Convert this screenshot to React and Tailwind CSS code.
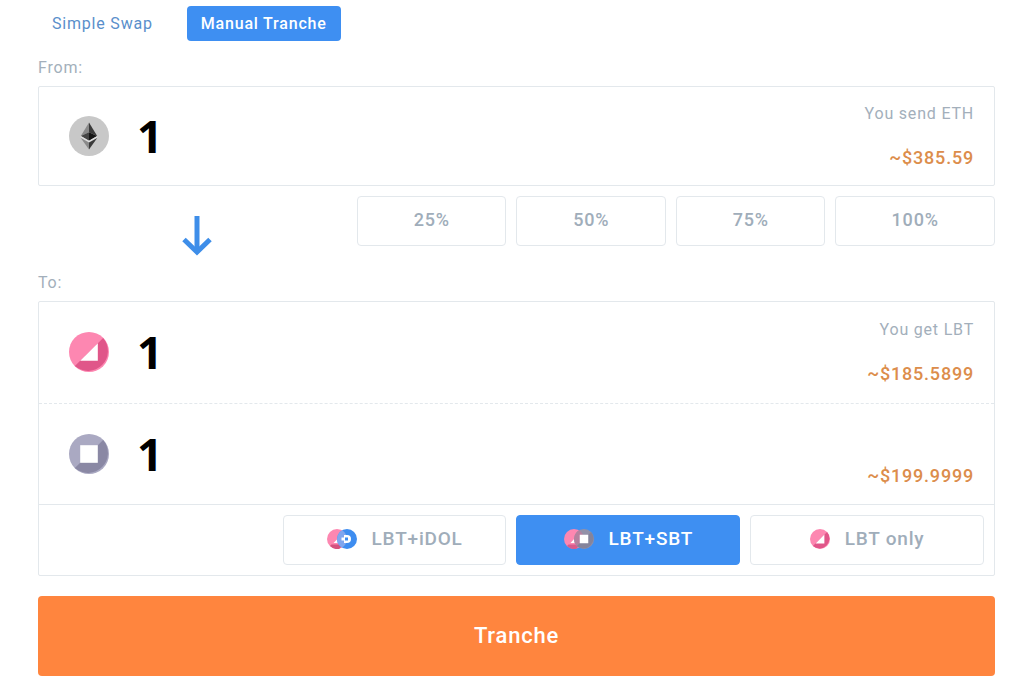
import { useState } from "react";

function EthIcon() {
    return (
        <svg viewBox="0 0 40 40" className="size-10 shrink-0" aria-hidden="true">
            <circle cx="20" cy="20" r="20" fill="#c8c8c8" />
            <path d="M20 6.5 L11.8 20 L20 16.3 Z" fill="#8a8a8a" />
            <path d="M20 6.5 L28.2 20 L20 16.3 Z" fill="#3a3a3a" />
            <path d="M11.8 20 L20 16.3 V24.8 Z" fill="#454545" />
            <path d="M28.2 20 L20 16.3 V24.8 Z" fill="#161616" />
            <path d="M11.8 20 L20 24.8 L28.2 20 L28.2 21.6 L20 26.4 L11.8 21.6 Z" fill="#dedede" />
            <path d="M11.8 21.9 L20 26.6 V33.5 Z" fill="#8a8a8a" />
            <path d="M28.2 21.9 L20 26.6 V33.5 Z" fill="#3a3a3a" />
        </svg>
    );
}

function LbtIcon({ className }) {
    return (
        <svg viewBox="0 0 40 40" className={className} aria-hidden="true">
            <circle cx="20" cy="20" r="20" fill="#fd87b1" />
            <path d="M34.1 5.9 A20 20 0 0 1 5.9 34.1 Z" fill="#e05689" />
            <path d="M28.8 11.2 V28.8 H11.2 Z" fill="#fff" />
        </svg>
    );
}

function SbtIcon() {
    return (
        <svg viewBox="0 0 40 40" className="size-10 shrink-0" aria-hidden="true">
            <circle cx="20" cy="20" r="20" fill="#aaa9c2" />
            <path d="M34.1 5.9 A20 20 0 0 1 5.9 34.1 Z" fill="#8a88a4" />
            <rect x="11.2" y="11.2" width="17.6" height="17.6" fill="#fff" />
        </svg>
    );
}

// LBT coin with the iDOL ring laid over it
function LbtIdolIcon() {
    return (
        <svg viewBox="0 0 60 40" className="h-5 w-[30px] shrink-0" aria-hidden="true">
            <circle cx="20" cy="20" r="20" fill="#fd87b1" />
            <path d="M9 31 H32 L25 39.4 A20 20 0 0 1 6 34.2 Z" fill="#d4527f" />
            <path d="M22 19 V28 H13 Z" fill="#fff" />
            <circle cx="40" cy="20" r="20" fill="#3e8df0" />
            <path d="M30 2.7 A20 20 0 0 1 30 37.3 A20 20 0 0 1 30 2.7 Z" fill="#7fa5ee" />
            <path d="M34 12 H40 A8 8 0 0 1 40 28 H34 V23 H29 V17 H34 Z" fill="#fff" />
            <rect x="36" y="17" width="6" height="6" fill="#3e8df0" />
        </svg>
    );
}

function LbtSbtIcon() {
    return (
        <svg viewBox="0 0 60 40" className="h-5 w-[30px] shrink-0" aria-hidden="true">
            <circle cx="20" cy="20" r="20" fill="#fd87b1" />
            <path d="M9 31 H32 L25 39.4 A20 20 0 0 1 6 34.2 Z" fill="#d95c8c" />
            <path d="M22 18 V28 H13 Z" fill="#fff" />
            <circle cx="40" cy="20" r="20" fill="#9391a8" />
            <path d="M30 2.7 A20 20 0 0 1 30 37.3 A20 20 0 0 1 30 2.7 Z" fill="#b4819f" />
            <path d="M54.1 5.9 A20 20 0 0 1 25.9 34.1 Z" fill="#85849b" />
            <rect x="31.5" y="11.5" width="17" height="17" fill="#fff" />
        </svg>
    );
}

function AmountRow({ id, icon, label, value, onChange, caption, price, padding }) {
    return (
        <div className={"flex items-center gap-7 pr-5 pl-[30px] " + padding}>
            {icon}
            <input
                id={id}
                aria-label={label}
                value={value}
                onChange={(e) => onChange(e.target.value)}
                className="h-16 min-w-0 flex-1 bg-transparent font-['Open_Sans',sans-serif] text-[45px] leading-[64px] font-bold text-black outline-none"
            />
            <div className="flex flex-col gap-5 text-right">
                <label htmlFor={id} className="h-6 text-[16px] leading-6 text-[#a3afbb]">
                    {caption}
                </label>
                <span className="text-[18px] leading-6 font-medium text-[#dc8d4b]">{price}</span>
            </div>
        </div>
    );
}

const percents = [25, 50, 75, 100];

const pairs = [
    { name: "LBT+iDOL", icon: <LbtIdolIcon /> },
    { name: "LBT+SBT", icon: <LbtSbtIcon /> },
    { name: "LBT only", icon: <LbtIcon className="size-5 shrink-0" /> },
];

export default function App() {

    const [tab, setTab] = useState("Manual Tranche");
    const [pair, setPair] = useState("LBT+SBT");
    const [eth, setEth] = useState("1");
    const [lbt, setLbt] = useState("1");
    const [sbt, setSbt] = useState("1");

    return (
        <form
            onSubmit={(e) => e.preventDefault()}
            className="bg-white pt-1.5 pr-[34px] pb-5 pl-[38px] font-[Roboto,sans-serif] tracking-wider"
        >

            <div className="flex gap-5">
                {["Simple Swap", "Manual Tranche"].map((name) => (
                    <button
                        key={name}
                        type="button"
                        onClick={() => setTab(name)}
                        className={
                            "h-[35px] rounded px-[14px] text-[16px] leading-5 " +
                            (tab === name ? "bg-[#3e8ff2] font-medium text-white" : "text-[#5a8fcb]")
                        }
                    >
                        {name}
                    </button>
                ))}
            </div>

            <h2 className="mt-[17px] text-[16px] leading-5 text-[#a3afbb]">From:</h2>

            <div className="mt-2 rounded-xs border border-[#e3e8ec]">
                <AmountRow
                    id="send-eth"
                    icon={<EthIcon />}
                    label="ETH to send"
                    value={eth}
                    onChange={setEth}
                    caption="You send ETH"
                    price="~$385.59"
                    padding="py-[15px]"
                />
            </div>

            <div className="mt-2.5 flex">
                <div className="flex w-1/3 justify-center pt-5">
                    <svg viewBox="0 0 30 40" className="h-10 w-[30px]" fill="none" stroke="#3e8ee9" strokeWidth="5" aria-hidden="true">
                        <path d="M15 0 V36" />
                        <path d="M2 23.5 L15 36 L28 23.5" />
                    </svg>
                </div>
                <div className="flex w-2/3">
                    {percents.map((percent) => (
                        <button
                            key={percent}
                            type="button"
                            className="mr-2.5 h-[50px] w-[calc(25%-10px)] rounded border border-[#e3e8ec] pb-0.5 text-[18px] leading-6 font-medium text-[#a0adba] last:mr-0 last:w-1/4"
                        >
                            {percent}%
                        </button>
                    ))}
                </div>
            </div>

            <h2 className="mt-[17px] text-[16px] leading-5 text-[#a3afbb]">To:</h2>

            <div className="mt-2 rounded-xs border border-[#e3e8ec]">
                <AmountRow
                    id="get-lbt"
                    icon={<LbtIcon className="size-10 shrink-0" />}
                    label="LBT to receive"
                    value={lbt}
                    onChange={setLbt}
                    caption="You get LBT"
                    price="~$185.5899"
                    padding="pt-4 pb-[17px]"
                />
                <div className="border-t border-dashed border-[#e3e8ec]">
                    <AmountRow
                        id="get-sbt"
                        icon={<SbtIcon />}
                        label="SBT to receive"
                        value={sbt}
                        onChange={setSbt}
                        caption=""
                        price="~$199.9999"
                        padding="py-4"
                    />
                </div>
                <div className="flex justify-end border-t border-[#e3e8ec] p-2.5">
                    <div className="flex w-3/4">
                        {pairs.map(({ name, icon }) => (
                            <button
                                key={name}
                                type="button"
                                onClick={() => setPair(name)}
                                className={
                                    "mr-2.5 flex h-[50px] w-[calc(100%/3-10px)] items-center justify-center gap-[15px] rounded border pb-0.5 text-[19px] leading-6 font-medium last:mr-0 last:w-1/3 " +
                                    (pair === name
                                        ? "border-[#3e8ff2] bg-[#3e8ff2] text-white"
                                        : "border-[#e3e8ec] text-[#a0adba]")
                                }
                            >
                                {icon}
                                {name}
                            </button>
                        ))}
                    </div>
                </div>
            </div>

            <button
                type="submit"
                className="mt-5 h-20 w-full rounded bg-[#ff853e] text-[22px] leading-6 font-medium text-white"
            >
                Tranche
            </button>

        </form>
    );
}
